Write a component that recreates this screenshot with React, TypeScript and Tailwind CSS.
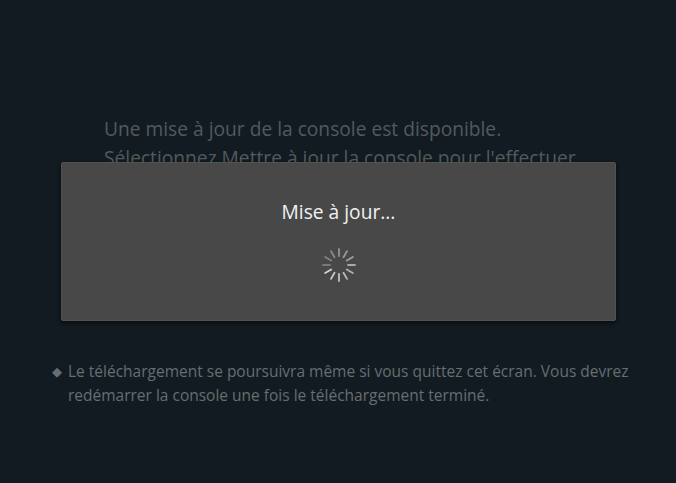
import React from "react";

const ticks = Array.from({ length: 12 }, (_, i) => i);

function Spinner() {
  return (
    <svg width="40" height="40" viewBox="-20 -20 40 40">
      {ticks.map((i) => {
        const a = (i * 30 * Math.PI) / 180;
        const x1 = Math.cos(a) * 9;
        const y1 = Math.sin(a) * 9;
        const x2 = Math.cos(a) * 16;
        const y2 = Math.sin(a) * 16;
        const op = 0.35 + ((i + 6) % 12) / 18;
        return (
          <line
            key={i}
            x1={x1}
            y1={y1}
            x2={x2}
            y2={y2}
            stroke="#d8d8d8"
            strokeWidth="1.8"
            strokeLinecap="round"
            style={{ opacity: op }}
          />
        );
      })}
    </svg>
  );
}

export default function App() {
  return (
    <div className="relative w-[676px] h-[483px] overflow-hidden bg-[#121b21] font-['Open_Sans',sans-serif]">
      {/* Message behind the dialog */}
      <div className="pl-[104px] pt-[114px] text-[19.2px] leading-[29px] text-[#54595d]">
        <p>Une mise à jour de la console est disponible.</p>
        <p>Sélectionnez Mettre à jour la console pour l'effectuer.</p>
      </div>

      {/* Note */}
      <div className="flex gap-[6px] pl-[52px] pr-2 pt-[187px] text-[15.5px] leading-[24px] text-[#676d72]">
        <span className="text-[13px] leading-[24px]">◆</span>
        <p>
          Le téléchargement se poursuivra même si vous quittez cet écran. Vous devrez
          redémarrer la console une fois le téléchargement terminé.
        </p>
      </div>

      {/* Dialog */}
      <div className="absolute left-[61px] top-[162px] w-[555px] h-[159px] rounded-[2px] bg-[#484848] border border-[#525252] shadow-[0_2px_4px_rgba(0,0,0,0.6)] flex flex-col items-center">
        <div className="mt-[36px] text-[19.2px] leading-[26px] text-[#f2f2f2]">Mise à jour...</div>
        <div className="mt-[20px]">
          <Spinner />
        </div>
      </div>
    </div>
  );
}
